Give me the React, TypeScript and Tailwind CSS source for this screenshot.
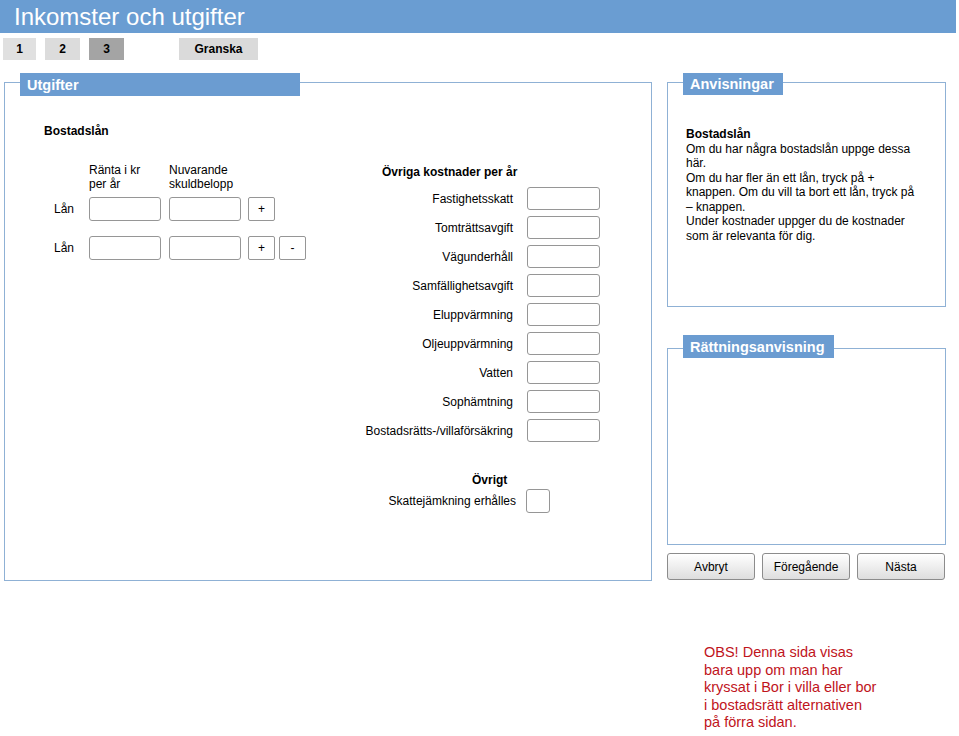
import React from "react";

const costRows = [
  "Fastighetsskatt",
  "Tomträttsavgift",
  "Vägunderhåll",
  "Samfällighetsavgift",
  "Eluppvärmning",
  "Oljeuppvärmning",
  "Vatten",
  "Sophämtning",
  "Bostadsrätts-/villaförsäkring",
];

function Field({ className = "w-[72px] h-[24px]" }: { className?: string }) {
  return <div className={`${className} bg-white border border-[#969696] rounded-[3px]`} />;
}

function SmallButton({ label }: { label: string }) {
  return (
    <div className="w-[27px] h-[24px] bg-white border border-[#969696] rounded-[2px] flex items-center justify-center text-[12px] text-black">
      {label}
    </div>
  );
}

function LoanRow({ removable }: { removable?: boolean }) {
  return (
    <div className="flex items-center">
      <span className="w-[45px] pl-[10px] text-[12px]">Lån</span>
      <Field />
      <div className="w-[8px]" />
      <Field />
      <div className="w-[7px]" />
      <SmallButton label="+" />
      {removable && (
        <>
          <div className="w-[4px]" />
          <SmallButton label="-" />
        </>
      )}
    </div>
  );
}

function NavButton({ label }: { label: string }) {
  return (
    <div className="w-[88px] h-[27px] rounded-[3px] border border-[#8c8c8c] bg-gradient-to-b from-white to-[#dedede] flex items-center justify-center text-[12px] text-black">
      {label}
    </div>
  );
}

export default function App() {
  return (
    <div className="w-[959px] h-[736px] bg-white text-black font-['Liberation_Sans',Arial,sans-serif] overflow-hidden">
      {/* Header */}
      <div className="w-[956px] h-[33px] bg-[#6a9dd2] pl-[14px] text-[24px] leading-[33px] text-white">
        Inkomster och utgifter
      </div>

      {/* Steps */}
      <div className="flex mt-[5px] pl-[3px] h-[22px] text-[12px] font-bold">
        <div className="w-[33px] bg-[#e0e0e0] flex items-center justify-center">1</div>
        <div className="w-[35px] ml-[9px] bg-[#dcdcdc] flex items-center justify-center">2</div>
        <div className="w-[35px] ml-[9px] bg-[#a4a4a4] flex items-center justify-center">3</div>
        <div className="w-[79px] ml-[55px] bg-[#dadada] flex items-center justify-center">Granska</div>
      </div>

      <div className="flex mt-[22px] pl-[4px]">
        {/* Utgifter panel */}
        <div className="relative w-[648px] h-[499px] border border-[#8fb1d5]">
          <div className="absolute left-[15px] -top-[10px] w-[280px] h-[23px] bg-[#6b9cd1] pl-[7px] text-[14.5px] font-bold leading-[24px] text-white">
            Utgifter
          </div>

          <div className="flex pt-[41px] pl-[39px]">
            {/* Loans */}
            <div className="w-[316px]">
              <div className="text-[12px] leading-[14px] font-bold">Bostadslån</div>
              <div className="flex mt-[25px] text-[12px] leading-[14px]">
                <div className="w-[45px]" />
                <div className="w-[80px]">Ränta i kr<br />per år</div>
                <div>Nuvarande<br />skuldbelopp</div>
              </div>
              <div className="mt-[6px]">
                <LoanRow />
              </div>
              <div className="mt-[15px]">
                <LoanRow removable />
              </div>
            </div>

            {/* Other costs */}
            <div className="mt-[41px] text-[12px]">
              <div className="pl-[22px] leading-[14px] font-bold">Övriga kostnader per år</div>
              <div className="mt-[8px] flex flex-col gap-[6px]">
                {costRows.map((r) => (
                  <div key={r} className="flex items-center">
                    <span className="w-[153px] text-right whitespace-nowrap">{r}</span>
                    <div className="w-[14px]" />
                    <Field className="w-[73px] h-[23px]" />
                  </div>
                ))}
              </div>
              <div className="mt-[31px] pl-[112px] leading-[14px] font-bold">Övrigt</div>
              <div className="mt-[2px] flex items-center">
                <span className="w-[156px] text-right whitespace-nowrap">Skattejämkning erhålles</span>
                <div className="w-[10px]" />
                <Field className="w-[24px] h-[24px]" />
              </div>
            </div>
          </div>
        </div>

        {/* Right column */}
        <div className="ml-[15px] w-[279px] flex flex-col">
          <div className="relative h-[225px] border border-[#8fb1d5] pt-[44px] pl-[18px]">
            <div className="absolute left-[15px] -top-[10px] w-[100px] h-[22px] bg-[#6b9cd1] pl-[7px] text-[14.5px] font-bold leading-[23px] text-white">
              Anvisningar
            </div>
            <div className="w-[234px] text-[12px] leading-[14.5px]">
              <div className="font-bold">Bostadslån</div>
              <div>Om du har några bostadslån uppge dessa här.</div>
              <div>Om du har fler än ett lån, tryck på + knappen. Om du vill ta bort ett lån, tryck på – knappen.</div>
              <div>Under kostnader uppger du de kostnader som är relevanta för dig.</div>
            </div>
          </div>

          <div className="relative mt-[41px] h-[197px] border border-[#8fb1d5]">
            <div className="absolute left-[15px] -top-[14px] w-[151px] h-[23px] bg-[#6b9cd1] pl-[7px] text-[14.5px] font-bold leading-[24px] text-white">
              Rättningsanvisning
            </div>
          </div>

          <div className="mt-[8px] flex gap-[7px]">
            <NavButton label="Avbryt" />
            <NavButton label="Föregående" />
            <NavButton label="Nästa" />
          </div>

          <div className="mt-[64px] ml-[37px] text-[14.5px] leading-[17.5px] text-[#c0141c]">
            OBS! Denna sida visas<br />
            bara upp om man har<br />
            kryssat i Bor i villa eller bor<br />
            i bostadsrätt alternativen<br />
            på förra sidan.
          </div>
        </div>
      </div>
    </div>
  );
}
